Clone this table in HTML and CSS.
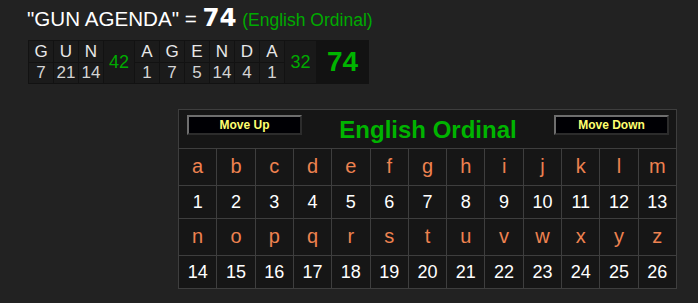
FILE: index.html
```html
<!DOCTYPE html>
<html>
<head>
<meta charset="utf-8">
<link rel="stylesheet" href="styles.css">
</head>
<body>
<div class="page">
  <div class="title">"GUN AGENDA" = <span class="total">74</span> <span class="cipher">(English Ordinal)</span></div>
  <div class="breakdown">
    <div class="ch r1">G</div><div class="ch r1">U</div><div class="ch r1">N</div>
    <div class="sum c4">42</div>
    <div class="ch r1">A</div><div class="ch r1">G</div><div class="ch r1">E</div><div class="ch r1">N</div><div class="ch r1">D</div><div class="ch r1">A</div>
    <div class="sum c11">32</div>
    <div class="grand">74</div>
    <div class="num">7</div><div class="num">21</div><div class="num">14</div>
    <div class="num">1</div><div class="num">7</div><div class="num">5</div><div class="num">14</div><div class="num">4</div><div class="num">1</div>
  </div>
  <div class="chart">
    <div class="head">
      <div class="btn-wrap left"><button class="btn">Move Up</button></div>
      <div class="chart-title">English Ordinal</div>
      <div class="btn-wrap right"><button class="btn">Move Down</button></div>
    </div>
    <div class="grid">
      <div class="l">a</div><div class="l">b</div><div class="l">c</div><div class="l">d</div><div class="l">e</div><div class="l">f</div><div class="l">g</div><div class="l">h</div><div class="l">i</div><div class="l">j</div><div class="l">k</div><div class="l">l</div><div class="l">m</div>
      <div class="n">1</div><div class="n">2</div><div class="n">3</div><div class="n">4</div><div class="n">5</div><div class="n">6</div><div class="n">7</div><div class="n">8</div><div class="n">9</div><div class="n">10</div><div class="n">11</div><div class="n">12</div><div class="n">13</div>
      <div class="l">n</div><div class="l">o</div><div class="l">p</div><div class="l">q</div><div class="l">r</div><div class="l">s</div><div class="l">t</div><div class="l">u</div><div class="l">v</div><div class="l">w</div><div class="l">x</div><div class="l">y</div><div class="l">z</div>
      <div class="n">14</div><div class="n">15</div><div class="n">16</div><div class="n">17</div><div class="n">18</div><div class="n">19</div><div class="n">20</div><div class="n">21</div><div class="n">22</div><div class="n">23</div><div class="n">24</div><div class="n">25</div><div class="n">26</div>
    </div>
  </div>
</div>
</body>
</html>
```
FILE: styles.css
```css
html, body {
  margin: 0;
  padding: 0;
  background: #222222;
}
body {
  font-family: "Liberation Sans", Arial, sans-serif;
  color: #fff;
}
.page {
  padding: 3px 0 0 28px;
}
.title {
  height: 30px;
  line-height: 30px;
  font-size: 20.6px;
  color: #ffffff;
  white-space: nowrap;
  margin-left: -1px;
}
.total {
  font-family: "DejaVu Sans", Verdana, sans-serif;
  font-weight: bold;
  font-size: 24.5px;
}
.cipher {
  color: #00aa00;
  font-size: 17.5px;
}
.breakdown {
  margin-top: 7px;
  display: grid;
  grid-template-columns: 24px 24px 24px 30px 24px 24px 24px 24px 24px 24px 31px 51px;
  grid-template-rows: 21px 20px;
  gap: 1px;
  padding: 1px;
  background: #121212;
  width: max-content;
}
.breakdown > div {
  display: flex;
  align-items: center;
  justify-content: center;
  background: #1b1b1b;
}
.ch {
  font-size: 17px;
  color: #e8e8e8;
}
.num {
  font-size: 17px;
  color: #d4d4d4;
}
.sum {
  grid-row: 1 / span 2;
  font-size: 18px;
  color: #00aa00;
  background: #191919 !important;
}
.c4 { grid-column: 4; }
.c11 { grid-column: 11; }
.grand {
  grid-row: 1 / span 2;
  grid-column: 12;
  font-size: 28px;
  font-weight: bold;
  color: #00b400;
  background: #121212 !important;
}
.chart {
  margin: 25px 0 0 150px;
  width: 499px;
  box-sizing: border-box;
  border-left: 1px solid #3e3e3e;
  border-top: 1px solid #3e3e3e;
  background: #161616;
}
.head {
  display: grid;
  grid-template-columns: 1fr auto 1fr;
  height: 38px;
  border-right: 1px solid #3e3e3e;
  border-bottom: 1px solid #3e3e3e;
  padding: 0 7px 0 8px;
}
.btn-wrap {
  display: flex;
  align-items: flex-start;
  padding-top: 5px;
}
.btn-wrap.right {
  justify-content: flex-end;
}
.btn {
  width: 115px;
  height: 20px;
  box-sizing: border-box;
  margin: 0;
  padding: 0;
  background: #000004;
  border-style: solid;
  border-width: 2px;
  border-color: #6e6e6e #2c2c2c #2c2c2c #6e6e6e;
  color: #ffff70;
  font-family: "Liberation Sans", Arial, sans-serif;
  font-weight: bold;
  font-size: 12px;
  line-height: 16px;
}
.chart-title {
  display: flex;
  align-items: center;
  justify-content: center;
  font-size: 24px;
  font-weight: bold;
  color: #00b400;
  padding-top: 1px;
}
.grid {
  display: grid;
  grid-template-columns: repeat(13, 1fr);
  grid-template-rows: 37px 33px 37px 33px;
}
.grid > div {
  display: flex;
  align-items: center;
  justify-content: center;
  border-right: 1px solid #3e3e3e;
  border-bottom: 1px solid #3e3e3e;
}
.l {
  font-size: 20px;
  color: #ee8250;
  padding-bottom: 1px;
}
.n {
  font-size: 18px;
  color: #ffffff;
}
```
